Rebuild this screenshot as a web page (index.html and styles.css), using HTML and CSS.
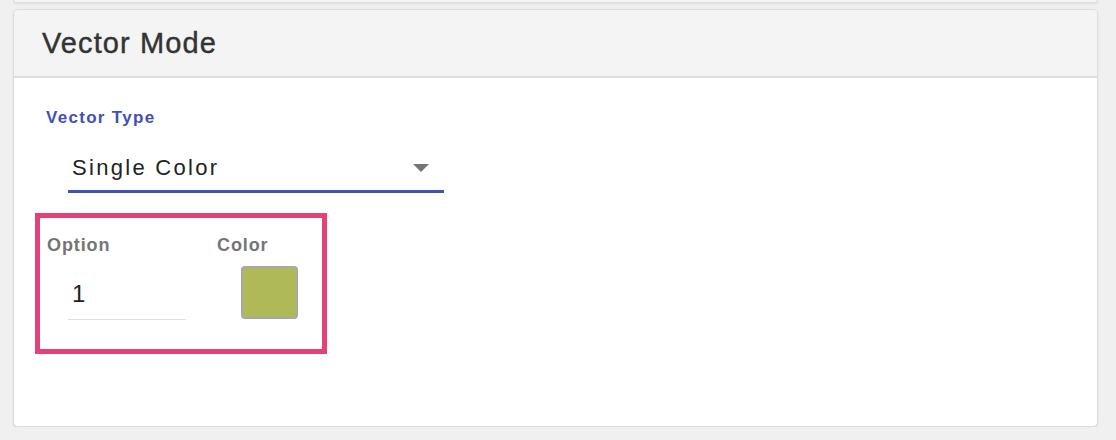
FILE: index.html
```html
<!DOCTYPE html>
<html lang="en">
<head>
    <meta charset="UTF-8">
    <meta name="viewport" content="width=device-width, initial-scale=1.0">
    <title>Vector Mode</title>
    <link rel="stylesheet" href="styles.css">
</head>
<body>
    <div class="page">
        <div class="prev-card"></div>

        <div class="card">
            <div class="card-header">Vector Mode</div>
            <div class="card-body">
                <label class="field-label">Vector Type</label>
                <div class="select">
                    <span class="select-value">Single Color</span>
                    <span class="select-arrow"></span>
                </div>

                <div class="option-box">
                    <div class="option-col">
                        <div class="sub-label">Option</div>
                        <div class="option-input">1</div>
                    </div>
                    <div class="color-col">
                        <div class="sub-label">Color</div>
                        <div class="swatch"></div>
                    </div>
                </div>
            </div>
        </div>
    </div>
</body>
</html>
```

FILE: styles.css
```css
/* Reset and basic layout */
* {
    margin: 0;
    padding: 0;
    box-sizing: border-box;
}

body {
    font-family: "Liberation Sans", Arial, sans-serif;
    background: #f0f0f0;
}

.page {
    padding: 0 18px 0 13px;
}

.prev-card {
    height: 3px;
    background: #f4f4f4;
    border: 1px solid #dedede;
    border-top: none;
    border-radius: 0 0 5px 5px;
    box-shadow: 0 1px 2px rgba(0, 0, 0, 0.08);
    margin-bottom: 6px;
}

.card {
    height: 418px;
    background: white;
    border: 1px solid #dcdcdc;
    border-radius: 5px;
    box-shadow: 0 1px 2px rgba(0, 0, 0, 0.1);
    overflow: hidden;
}

.card-header {
    background: #f4f4f4;
    border-bottom: 2px solid #dedede;
    padding: 1px 0 0 28px;
    line-height: 65px;
    font-size: 29px;
    letter-spacing: 1.1px;
    color: #333;
    -webkit-text-stroke: 0.4px #333;
}

.card-body {
    padding: 30px 0 0 21px;
}

.field-label {
    display: block;
    margin-left: 11px;
    font-size: 17px;
    line-height: 20px;
    font-weight: bold;
    letter-spacing: 1.3px;
    color: #3f51b5;
}

.select {
    display: flex;
    justify-content: space-between;
    align-items: flex-start;
    width: 376px;
    margin: 25px 0 0 33px;
    padding: 0 15px 7px 4px;
    border-bottom: 3px solid #3f51b5;
}

.select-value {
    font-size: 22px;
    line-height: 30px;
    letter-spacing: 2.3px;
    color: #222;
}

.select-arrow {
    margin-top: 11px;
    width: 0;
    height: 0;
    border-left: 8px solid transparent;
    border-right: 8px solid transparent;
    border-top: 8px solid #757575;
}

.option-box {
    display: flex;
    width: 292px;
    height: 141px;
    margin-top: 20px;
    padding: 16px 0 0 7px;
    border: 5px solid #e6407a;
}

.option-col {
    width: 170px;
}

.sub-label {
    font-size: 18px;
    line-height: 22px;
    font-weight: bold;
    letter-spacing: 0.9px;
    color: #757575;
}

.option-input {
    width: 118px;
    margin: 23px 0 0 21px;
    padding: 0 0 10px 4px;
    border-bottom: 1px solid #e0e0e0;
    font-size: 24px;
    line-height: 30px;
    color: #222;
}

.swatch {
    width: 57px;
    height: 53px;
    margin: 10px 0 0 24px;
    background: #b0b958;
    border: 2px solid #a8a8a8;
    border-radius: 4px;
}
```
